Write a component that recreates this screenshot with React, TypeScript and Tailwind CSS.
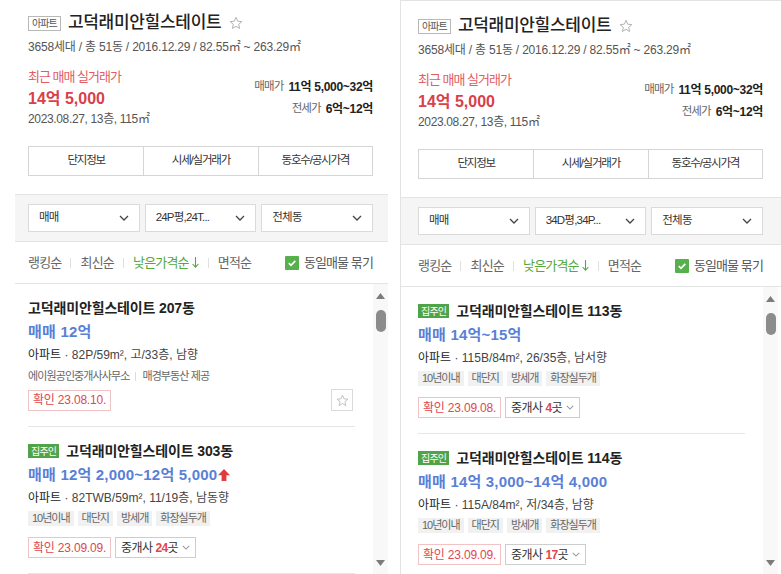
import React from "react";

type Listing = {
  owner?: boolean;
  dong: string;
  price: string;
  up?: boolean;
  info: string;
  tags?: string[];
  agency?: [string, string];
  checked: string;
  brokers?: string;
  star?: boolean;
};

const TAGS = ["10년이내", "대단지", "방세개", "화장실두개"];

const leftItems: Listing[] = [
  {
    dong: "207동",
    price: "12억",
    info: "82P/59m², 고/33층, 남향",
    agency: ["에이원공인중개사사무소", "매경부동산 제공"],
    checked: "23.08.10.",
    star: true,
  },
  {
    owner: true,
    dong: "303동",
    price: "12억 2,000~12억 5,000",
    up: true,
    info: "82TWB/59m², 11/19층, 남동향",
    tags: TAGS,
    checked: "23.09.09.",
    brokers: "24",
  },
];

const rightItems: Listing[] = [
  {
    owner: true,
    dong: "113동",
    price: "14억~15억",
    info: "115B/84m², 26/35층, 남서향",
    tags: TAGS,
    checked: "23.09.08.",
    brokers: "4",
  },
  {
    owner: true,
    dong: "114동",
    price: "14억 3,000~14억 4,000",
    info: "115A/84m², 저/34층, 남향",
    tags: TAGS,
    checked: "23.09.09.",
    brokers: "17",
  },
];

function Star({ size = 13, color = "#a8a8a8" }: { size?: number; color?: string }) {
  return (
    <svg width={size} height={size} viewBox="0 0 24 24">
      <polygon
        points="12,2.2 14.9,8.9 22,9.6 16.6,14.3 18.2,21.4 12,17.7 5.8,21.4 7.4,14.3 2,9.6 9.1,8.9"
        fill="none"
        stroke={color}
        strokeWidth="1.5"
        strokeLinejoin="round"
      />
    </svg>
  );
}

function Chevron({ w = 10, h = 6, color = "#444" }: { w?: number; h?: number; color?: string }) {
  return (
    <svg width={w} height={h} viewBox="0 0 10 6">
      <path d="M1 1l4 4 4-4" fill="none" stroke={color} strokeWidth="1.3" />
    </svg>
  );
}

function Scrollbar() {
  return (
    <div className="flex w-[15px] flex-col items-center bg-[#f8f8f8] pt-[9px] pb-[8px]">
      <svg width="9" height="6" viewBox="0 0 9 6">
        <path d="M4.5 0L9 6H0Z" fill="#7c7c7c" />
      </svg>
      <div className="mt-[11px] h-[22px] w-[10px] rounded-full bg-[#8c8c8c]" />
      <div className="flex-1" />
      <svg width="9" height="6" viewBox="0 0 9 6">
        <path d="M0 0H9L4.5 6Z" fill="#7c7c7c" />
      </svg>
    </div>
  );
}

function Item({ it }: { it: Listing }) {
  return (
    <div className="border-b border-[#e6e6e6] pt-[15px] pb-[15px]">
      <div className="flex h-[18px] items-center">
        {it.owner && (
          <span className="mr-[7px] flex h-[14px] items-center bg-[#4fa44a] px-[3px] text-[10px] tracking-[-0.8px] text-white">
            집주인
          </span>
        )}
        <span className="text-[14px] font-bold tracking-[-0.15px] text-[#222]">
          고덕래미안힐스테이트 {it.dong}
        </span>
      </div>
      <div className="mt-[4px] flex h-[22px] items-center text-[15px] font-bold tracking-[0.2px] text-[#5a7fd7]">
        <span>매매 {it.price}</span>
        {it.up && (
          <svg className="ml-[1px]" width="12" height="12" viewBox="0 0 12 12">
            <path d="M6 0L12 6.2H8.4V12H3.6V6.2H0Z" fill="#e23b3b" />
          </svg>
        )}
      </div>
      <div className="mt-[3px] h-[18px] text-[12px] leading-[18px] tracking-[0px] text-[#444]">
        <span className="text-[#222]">아파트</span> · {it.info}
      </div>
      {it.tags && (
        <div className="mt-[4px] flex gap-[4px]">
          {it.tags.map((t) => (
            <span
              key={t}
              className="flex h-[15px] items-center bg-[#f1f1f1] px-[4px] text-[11px] tracking-[-1px] text-[#666]"
            >
              {t}
            </span>
          ))}
        </div>
      )}
      {it.agency && (
        <div className="mt-[4px] flex h-[16px] items-center text-[11px] tracking-[-0.9px] text-[#666]">
          <span>{it.agency[0]}</span>
          <span className="mx-[6px] h-[9px] w-px bg-[#dcdcdc]" />
          <span>{it.agency[1]}</span>
        </div>
      )}
      <div className={`${it.tags ? "mt-[11px]" : "mt-[5px]"} flex items-center justify-between`}>
        <div className="flex gap-[4px]">
          <span className="flex h-[21px] items-center border border-[#f1c3c5] px-[4px] text-[12px] tracking-[-0.2px] text-[#e0474e]">
            확인 {it.checked}
          </span>
          {it.brokers && (
            <span className="flex h-[21px] items-center border border-[#cdcdcd] px-[5px] text-[12px] tracking-[-0.6px] text-[#333]">
              중개사<span className="ml-[3px] font-bold text-[#e0474e]">{it.brokers}</span>곳
              <span className="ml-[4px] flex">
                <Chevron w={8} h={5} color="#999" />
              </span>
            </span>
          )}
        </div>
        {it.star && (
          <span className="mr-[2px] flex h-[22px] w-[22px] items-center justify-center border border-[#dadada]">
            <Star size={13} color="#b5b5b5" />
          </span>
        )}
      </div>
    </div>
  );
}

function Panel({ right, sizeSel, items }: { right?: boolean; sizeSel: string; items: Listing[] }) {
  const pad = right ? "pl-[17px] pr-[18px]" : "pl-[13px] pr-[15px]";
  return (
    <div
      className={
        right
          ? "flex h-[574px] flex-1 flex-col border-l border-t border-[#e3e3e3] pt-[14px]"
          : "ml-[15px] flex h-[574px] w-[373px] shrink-0 flex-col pt-[12px]"
      }
    >
      <div className={pad}>
        <div className="flex h-[22px] items-center">
          <span className="flex h-[15px] items-center border border-[#b8b8b8] px-[3px] text-[10px] tracking-[-0.9px] text-[#555]">
            아파트
          </span>
          <span className="ml-[7px] text-[17px] font-medium tracking-[-0.3px] text-[#222]">고덕래미안힐스테이트</span>
          <span className="ml-[8px] flex">
            <Star size={14} />
          </span>
        </div>
        <div className="mt-[4px] h-[18px] text-[12px] leading-[18px] tracking-[-0.2px] text-[#555]">
          3658세대 / 총 51동 / 2016.12.29 / 82.55㎡ ~ 263.29㎡
        </div>
        <div className="mt-[12px] flex justify-between">
          <div>
            <div className="h-[18px] text-[13px] leading-[18px] tracking-[-1px] text-[#e35c62]">
              최근 매매 실거래가
            </div>
            <div className="mt-[2px] h-[22px] text-[16px] leading-[22px] font-bold text-[#d8404a]">
              14억 5,000
            </div>
            <div className="mt-[1px] h-[16px] text-[12px] leading-[16px] tracking-[-0.35px] text-[#555]">
              2023.08.27, 13층, 115㎡
            </div>
          </div>
          <div className="mt-[8px] flex flex-col items-end">
            <div className="flex h-[22px] items-center">
              <span className="text-[11.5px] tracking-[-0.9px] text-[#666]">매매가</span>
              <span className="ml-[5px] text-[12px] font-bold tracking-[-0.3px] text-[#222]">11억 5,000~32억</span>
            </div>
            <div className="flex h-[22px] items-center">
              <span className="text-[11.5px] tracking-[-0.9px] text-[#666]">전세가</span>
              <span className="ml-[5px] text-[12px] font-bold tracking-[-0.3px] text-[#222]">6억~12억</span>
            </div>
          </div>
        </div>
        <div className="mt-[19px] grid h-[30px] grid-cols-3 border border-[#d5d5d5] text-[11.5px] tracking-[-1.2px] text-[#333]">
          <div className="flex items-center justify-center">단지정보</div>
          <div className="flex items-center justify-center border-l border-[#d5d5d5]">시세/실거래가</div>
          <div className="flex items-center justify-center border-l border-[#d5d5d5]">동호수/공시가격</div>
        </div>
      </div>

      <div className={`mt-[18px] flex h-[48px] items-center gap-[5px] border-y border-[#e4e4e4] bg-[#f5f5f5] ${pad}`}>
        {["매매", sizeSel, "전체동"].map((s) => (
          <div
            key={s}
            className="flex h-[28px] flex-1 items-center justify-between border border-[#dadada] bg-white pl-[10px] pr-[10px] text-[11.5px] tracking-[-0.8px] text-[#333]"
          >
            <span>{s}</span>
            <Chevron />
          </div>
        ))}
      </div>

      <div className={`flex h-[42px] shrink-0 items-center justify-between border-b border-[#e4e4e4] ${pad}`}>
        <div className="flex items-center text-[13px] tracking-[-0.8px] text-[#666]">
          <span>랭킹순</span>
          <span className="mx-[9px] h-[10px] w-px bg-[#e0e0e0]" />
          <span>최신순</span>
          <span className="mx-[9px] h-[10px] w-px bg-[#e0e0e0]" />
          <span className="flex items-center text-[#55a83d]">
            낮은가격순
            <svg className="ml-[3px]" width="7" height="11" viewBox="0 0 7 11">
              <path d="M3.5 0V10M0.6 7L3.5 10.2L6.4 7" fill="none" stroke="#55a83d" strokeWidth="1.1" />
            </svg>
          </span>
          <span className="mx-[9px] h-[10px] w-px bg-[#e0e0e0]" />
          <span>면적순</span>
        </div>
        <div className="flex items-center">
          <span className="flex h-[14px] w-[14px] items-center justify-center rounded-[1px] bg-[#56b04c]">
            <svg width="10" height="10" viewBox="0 0 10 10">
              <path d="M1.8 5.2L4 7.3L8.3 2.8" fill="none" stroke="#fff" strokeWidth="1.7" />
            </svg>
          </span>
          <span className="ml-[5px] text-[13px] tracking-[-0.9px] text-[#555]">동일매물 묶기</span>
        </div>
      </div>

      <div className={`flex min-h-0 flex-1 ${right ? "pl-[17px] pr-[3px]" : "pl-[13px]"}`}>
        <div className="mr-[18px] flex-1 overflow-hidden">
          {items.map((it) => (
            <Item key={it.dong} it={it} />
          ))}
        </div>
        <Scrollbar />
      </div>
    </div>
  );
}

export default function App() {
  return (
    <div className="flex h-[574px] w-[781px] gap-[12px] overflow-hidden bg-white font-['Liberation_Sans','Noto_Sans_CJK_KR',sans-serif]">
      <Panel sizeSel="24P평,24T..." items={leftItems} />
      <Panel right sizeSel="34D평,34P..." items={rightItems} />
    </div>
  );
}
